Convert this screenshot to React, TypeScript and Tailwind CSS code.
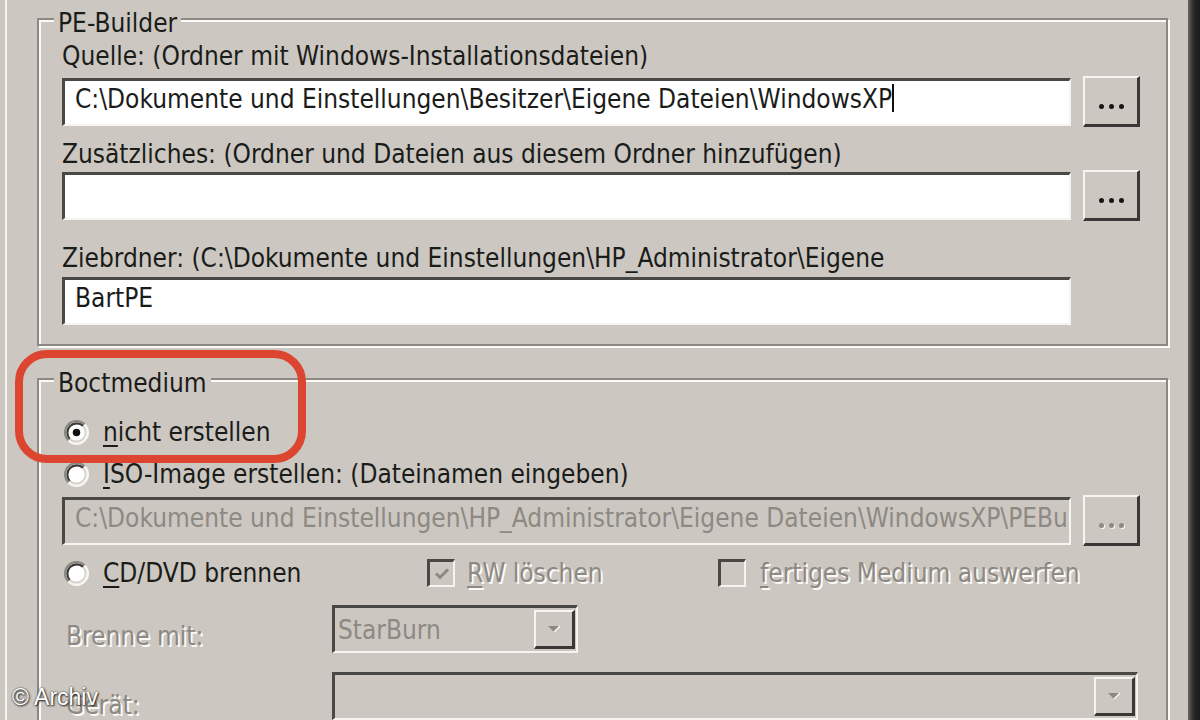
import React from "react";

const FONT = "font-['DejaVu_Sans_Condensed','DejaVu_Sans',sans-serif] text-[26px] leading-[30px]";
const DIS = "text-[#8d8983] [text-shadow:2px_2px_0_#fbfaf7]";
const SUNKEN =
  "border-t-[3px] border-l-[3px] border-t-[#4a4844] border-l-[#4a4844] border-b-2 border-r-2 border-b-[#f6f4f0] border-r-[#f6f4f0]";
const RAISED =
  "border-t-2 border-l-2 border-t-[#f7f5f1] border-l-[#f7f5f1] border-b-[3px] border-r-[3px] border-b-[#3a3836] border-r-[#3a3836]";

function Field({
  children,
  disabled,
  className = "",
}: {
  children?: React.ReactNode;
  disabled?: boolean;
  className?: string;
}) {
  return (
    <div
      className={`h-[48px] ${SUNKEN} pl-[10px] pt-[3px] overflow-hidden whitespace-nowrap ${
        disabled ? "bg-[#ccc7c1] text-[#8d8983]" : "bg-white text-[#1a1c1a]"
      } ${className}`}
    >
      {children}
    </div>
  );
}

function Dots({ disabled }: { disabled?: boolean }) {
  const c = disabled ? "bg-[#8d8983] shadow-[1px_1px_0_#fbfaf7]" : "bg-[#161616]";
  return (
    <div className={`w-[57px] h-[51px] shrink-0 ${RAISED} bg-[#ccc7c1] flex items-center justify-center gap-[5px] pt-[10px]`}>
      <span className={`w-[5px] h-[5px] rounded-full ${c}`} />
      <span className={`w-[5px] h-[5px] rounded-full ${c}`} />
      <span className={`w-[5px] h-[5px] rounded-full ${c}`} />
    </div>
  );
}

function Radio({ checked }: { checked?: boolean }) {
  return (
    <svg width="25" height="25" viewBox="0 0 24 24" className="shrink-0">
      <circle cx="12" cy="12" r="11" fill="#ffffff" />
      <path d="M4.22 19.78A11 11 0 0 1 19.78 4.22" stroke="#8a8681" strokeWidth="2" fill="none" />
      <path d="M19.78 4.22A11 11 0 0 1 4.22 19.78" stroke="#f8f6f2" strokeWidth="2" fill="none" />
      <path d="M5.64 18.36A9 9 0 0 1 18.36 5.64" stroke="#3a3836" strokeWidth="2" fill="none" />
      <path d="M18.36 5.64A9 9 0 0 1 5.64 18.36" stroke="#d8d4ce" strokeWidth="2" fill="none" />
      {checked && <circle cx="12" cy="12" r="3.6" fill="#111111" />}
    </svg>
  );
}

function Check({ checked }: { checked?: boolean }) {
  return (
    <div className={`w-[28px] h-[28px] shrink-0 ${SUNKEN} bg-[#ccc7c1] flex items-center justify-center`}>
      {checked && (
        <svg width="16" height="14" viewBox="0 0 16 14">
          <path d="M2 6.5 L6 10.5 L14 2.5" stroke="#8d8983" strokeWidth="3" fill="none" />
        </svg>
      )}
    </div>
  );
}

function Combo({ text, className = "" }: { text?: string; className?: string }) {
  return (
    <div className={`h-[48px] ${SUNKEN} bg-[#ccc7c1] flex items-center justify-between pl-[3px] pr-[1px] ${className}`}>
      <span className="text-[#8d8983] whitespace-nowrap">{text}</span>
      <div className={`w-[41px] h-[39px] ${RAISED} bg-[#ccc7c1] flex items-center justify-center`}>
        <svg width="16" height="10" viewBox="0 0 16 10">
          <path d="M2 2 L14 2 L8 8 Z" fill="#8d8983" />
          <path d="M14 2 L8 8" stroke="#fbfaf7" strokeWidth="1.5" />
        </svg>
      </div>
    </div>
  );
}

function Group({ title, children }: { title: string; children: React.ReactNode }) {
  return (
    <fieldset className="min-w-0 w-[1131px] m-0 p-0 border-2 border-[#8c8884] shadow-[2px_2px_0_#fbfaf7,inset_2px_2px_0_#fbfaf7]">
      <legend className="ml-[15px] px-[4px] pt-[8px] bg-[#ccc7c1] text-[#1a1c1a]">{title}</legend>
      {children}
    </fieldset>
  );
}

export default function App() {
  return (
    <div className={`relative w-[1200px] h-[720px] overflow-hidden bg-[#ccc7c1] flex ${FONT}`}>
      <div className="flex-1 ml-[5px] border-l-2 border-[#f7f5f1] pl-[30px] text-[#1a1c1a]">
        <Group title="PE-Builder">
          <div className="pl-[23px] pr-[26px] pt-[3px] pb-[19px]">
            <div>Quelle: (Ordner mit Windows-Installationsdateien)</div>
            <div className="mt-[5px] flex items-center gap-[12px]">
              <Field className="flex-1">
                C:\Dokumente und Einstellungen\Besitzer\Eigene Dateien\WindowsXP
                <span className="inline-block align-middle w-[2px] h-[28px] bg-[#111] -mt-[4px]" />
              </Field>
              <Dots />
            </div>
            <div className="mt-[12px]">Zusätzliches: (Ordner und Dateien aus diesem Ordner hinzufügen)</div>
            <div className="mt-[1px] flex items-center gap-[12px]">
              <Field className="flex-1" />
              <Dots />
            </div>
            <div className="mt-[22px]">Ziebrdner: (C:\Dokumente und Einstellungen\HP_Administrator\Eigene</div>
            <div className="mt-[4px] flex items-center gap-[12px]">
              <Field className="flex-1">BartPE</Field>
              <div className="w-[57px] shrink-0" />
            </div>
          </div>
        </Group>

        <div className="mt-[14px]">
          <Group title="Boctmedium">
            <div className="pl-[23px] pr-[26px] pt-[19px] pb-[20px]">
              <div className="flex items-center gap-[14px] pl-[2px]">
                <Radio checked />
                <span>
                  <u className="underline-offset-[4px]">n</u>icht erstellen
                </span>
              </div>
              <div className="mt-[12px] flex items-center gap-[14px] pl-[2px]">
                <Radio />
                <span>
                  <u className="underline-offset-[4px]">I</u>SO-Image erstellen: (Dateinamen eingeben)
                </span>
              </div>
              <div className="mt-[6px] flex items-center gap-[12px]">
                <Field disabled className="flex-1">
                  C:\Dokumente und Einstellungen\HP_Administrator\Eigene Dateien\WindowsXP\PEBuilder.iso
                </Field>
                <Dots disabled />
              </div>
              <div className="mt-[12px] flex items-center h-[30px]">
                <div className="w-[365px] flex items-center gap-[14px] pl-[2px]">
                  <Radio />
                  <span>
                    <u className="underline-offset-[4px]">C</u>D/DVD brennen
                  </span>
                </div>
                <div className="w-[291px] flex items-center gap-[12px]">
                  <Check checked />
                  <span className={DIS}>
                    <u className="underline-offset-[4px]">R</u>W löschen
                  </span>
                </div>
                <div className="flex items-center gap-[14px]">
                  <Check />
                  <span className={DIS}>
                    <u className="underline-offset-[4px]">f</u>ertiges Medium auswerfen
                  </span>
                </div>
              </div>
              <div className="mt-[17px] flex items-start">
                <div className={`w-[270px] pl-[4px] mt-[16px] ${DIS}`}>Brenne mit:</div>
                <Combo text="StarBurn" className="w-[246px]" />
              </div>
              <div className="mt-[19px] flex items-start">
                <div className={`w-[270px] pl-[4px] mt-[18px] ${DIS}`}>Gerät:</div>
                <Combo className="w-[806px]" />
              </div>
            </div>
          </Group>
        </div>
      </div>
      <div className="w-[12px] bg-linear-to-r from-[#6a6866] via-[#262626] to-[#1a1a1a]" />

      <div className="absolute left-[15px] top-[350px] w-[291px] h-[113px] border-[8px] border-[#dc4630] rounded-[32px]" />
      <div className="absolute left-[12px] top-[682px] font-['Liberation_Sans',Arial,sans-serif] text-[23px] leading-[30px] text-white [text-shadow:1px_1px_2px_#222,0_0_2px_#333]">
        © Archiv
      </div>
    </div>
  );
}
